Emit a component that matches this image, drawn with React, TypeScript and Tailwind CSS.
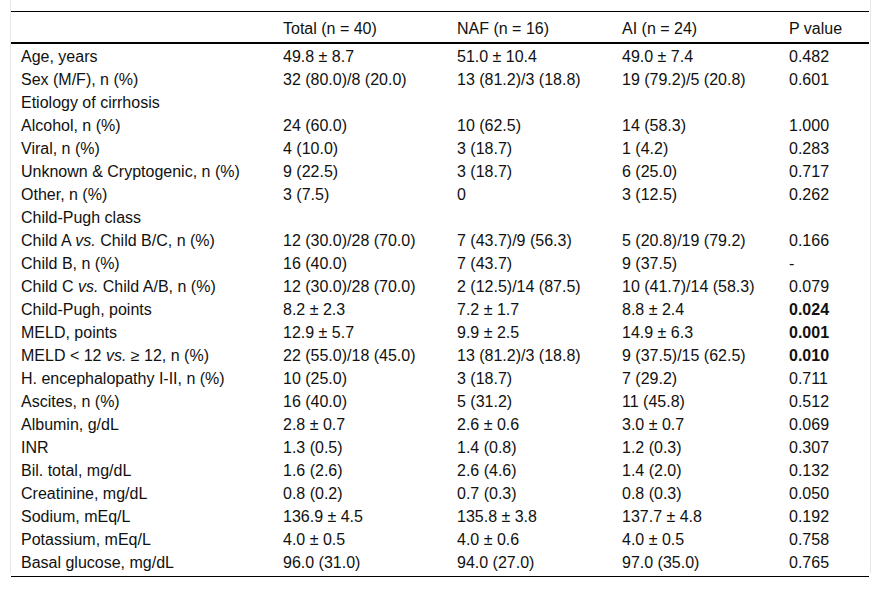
import React from "react";

type Row = { label: React.ReactNode; t?: string; n?: string; a?: string; p?: string; bold?: boolean };

const vs = <i>vs.</i>;

const rows: Row[] = [
  { label: "Age, years", t: "49.8 ± 8.7", n: "51.0 ± 10.4", a: "49.0 ± 7.4", p: "0.482" },
  { label: "Sex (M/F), n (%)", t: "32 (80.0)/8 (20.0)", n: "13 (81.2)/3 (18.8)", a: "19 (79.2)/5 (20.8)", p: "0.601" },
  { label: "Etiology of cirrhosis" },
  { label: "Alcohol, n (%)", t: "24 (60.0)", n: "10 (62.5)", a: "14 (58.3)", p: "1.000" },
  { label: "Viral, n (%)", t: "4 (10.0)", n: "3 (18.7)", a: "1 (4.2)", p: "0.283" },
  { label: "Unknown & Cryptogenic, n (%)", t: "9 (22.5)", n: "3 (18.7)", a: "6 (25.0)", p: "0.717" },
  { label: "Other, n (%)", t: "3 (7.5)", n: "0", a: "3 (12.5)", p: "0.262" },
  { label: "Child-Pugh class" },
  { label: <>Child A {vs} Child B/C, n (%)</>, t: "12 (30.0)/28 (70.0)", n: "7 (43.7)/9 (56.3)", a: "5 (20.8)/19 (79.2)", p: "0.166" },
  { label: "Child B, n (%)", t: "16 (40.0)", n: "7 (43.7)", a: "9 (37.5)", p: "-" },
  { label: <>Child C {vs} Child A/B, n (%)</>, t: "12 (30.0)/28 (70.0)", n: "2 (12.5)/14 (87.5)", a: "10 (41.7)/14 (58.3)", p: "0.079" },
  { label: "Child-Pugh, points", t: "8.2 ± 2.3", n: "7.2 ± 1.7", a: "8.8 ± 2.4", p: "0.024", bold: true },
  { label: "MELD, points", t: "12.9 ± 5.7", n: "9.9 ± 2.5", a: "14.9 ± 6.3", p: "0.001", bold: true },
  { label: <>MELD &lt; 12 {vs} ≥ 12, n (%)</>, t: "22 (55.0)/18 (45.0)", n: "13 (81.2)/3 (18.8)", a: "9 (37.5)/15 (62.5)", p: "0.010", bold: true },
  { label: "H. encephalopathy I-II, n (%)", t: "10 (25.0)", n: "3 (18.7)", a: "7 (29.2)", p: "0.711" },
  { label: "Ascites, n (%)", t: "16 (40.0)", n: "5 (31.2)", a: "11 (45.8)", p: "0.512" },
  { label: "Albumin, g/dL", t: "2.8 ± 0.7", n: "2.6 ± 0.6", a: "3.0 ± 0.7", p: "0.069" },
  { label: "INR", t: "1.3 (0.5)", n: "1.4 (0.8)", a: "1.2 (0.3)", p: "0.307" },
  { label: "Bil. total, mg/dL", t: "1.6 (2.6)", n: "2.6 (4.6)", a: "1.4 (2.0)", p: "0.132" },
  { label: "Creatinine, mg/dL", t: "0.8 (0.2)", n: "0.7 (0.3)", a: "0.8 (0.3)", p: "0.050" },
  { label: "Sodium, mEq/L", t: "136.9 ± 4.5", n: "135.8 ± 3.8", a: "137.7 ± 4.8", p: "0.192" },
  { label: "Potassium, mEq/L", t: "4.0 ± 0.5", n: "4.0 ± 0.6", a: "4.0 ± 0.5", p: "0.758" },
  { label: "Basal glucose, mg/dL", t: "96.0 (31.0)", n: "94.0 (27.0)", a: "97.0 (35.0)", p: "0.765" },
];

const grid = "grid grid-cols-[272px_174px_165px_167px_80px]";

export default function App() {
  return (
    <div className="w-[881px] h-[591px] bg-white pl-[10px] font-['Liberation_Sans',Arial,sans-serif] text-[16px] text-[#111]">
      <div className="w-[861px] h-[573px] border-x border-[#e6e6e6] pt-[11px]">
        <div className="w-[858px] border-t border-black">
          <div className={`${grid} h-[32px] items-center pt-[4px] border-b-2 border-black`}>
            <div className="pl-[10px]"></div>
            <div>Total (n = 40)</div>
            <div>NAF (n = 16)</div>
            <div>AI (n = 24)</div>
            <div>P value</div>
          </div>
          <div className="pt-[1px]">
            {rows.map((r, i) => (
              <div key={i} className={`${grid} h-[23px] items-center leading-[23px]`}>
                <div className="pl-[10px] whitespace-nowrap">{r.label}</div>
                <div className="whitespace-nowrap">{r.t}</div>
                <div className="whitespace-nowrap">{r.n}</div>
                <div className="whitespace-nowrap">{r.a}</div>
                <div className={r.bold ? "font-bold whitespace-nowrap" : "whitespace-nowrap"}>{r.p}</div>
              </div>
            ))}
          </div>
          <div className="h-[3px] border-b border-black"></div>
        </div>
      </div>
    </div>
  );
}
